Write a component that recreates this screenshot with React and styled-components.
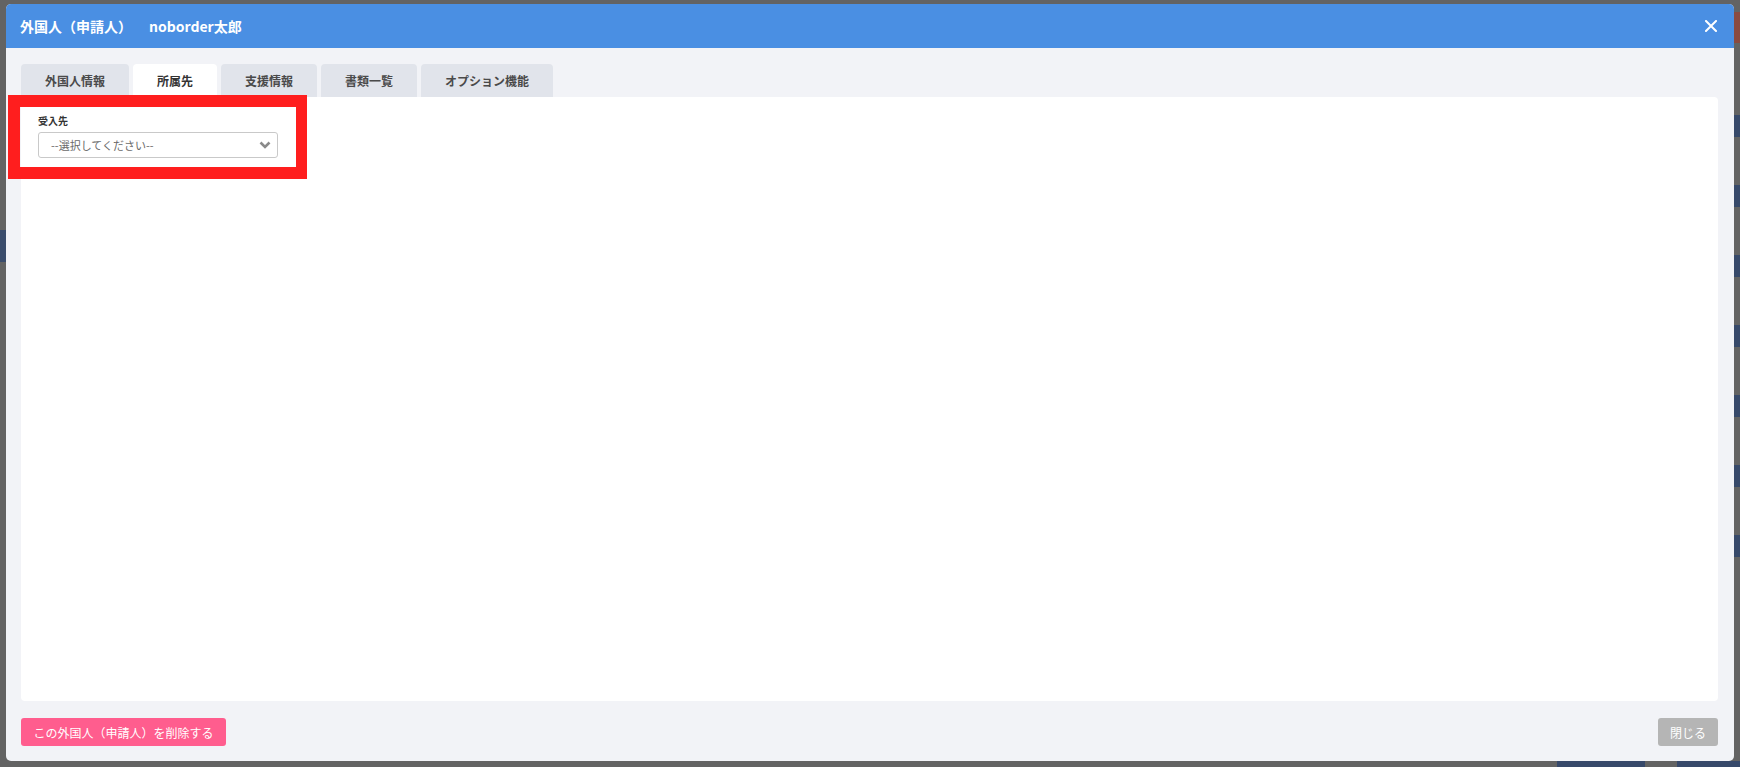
import React, { useState } from "react";
import styled, { createGlobalStyle } from "styled-components";

const GlobalStyle = createGlobalStyle`
  html, body {
    margin: 0;
    padding: 0;
  }
  body {
    font-family: "Noto Sans CJK JP", "Noto Sans", sans-serif;
    color: #333;
  }
  * {
    box-sizing: border-box;
  }
`;

// dimmed page behind the modal, only slivers of it are visible
const Backdrop = styled.div`
  width: 1740px;
  height: 767px;
  padding: 4px 6px 6px 6px;
  display: flex;
  background-color: #636363;
  background-image:
    linear-gradient(#8a4a40, #8a4a40),
    repeating-linear-gradient(
      to bottom,
      #37496a 0px,
      #37496a 22px,
      #636363 22px,
      #636363 70px
    ),
    linear-gradient(#3a4c6c, #3a4c6c),
    linear-gradient(#37496a, #37496a),
    linear-gradient(#37496a, #37496a);
  background-size: 6px 31px, 6px 470px, 6px 32px, 88px 6px, 63px 6px;
  background-position: 1734px 12px, 1734px 115px, 0 230px, 1557px 761px,
    1677px 761px;
  background-repeat: no-repeat;
`;

const Modal = styled.div`
  flex: 1;
  display: flex;
  flex-direction: column;
  background: #f2f3f7;
  border-radius: 5px;
  overflow: hidden;
`;

const Header = styled.div`
  height: 44px;
  flex-shrink: 0;
  display: flex;
  align-items: center;
  justify-content: space-between;
  padding: 0 16px 0 14px;
  background: #4a8fe3;
  color: #fff;
`;

const Title = styled.h1`
  margin: 0;
  font-size: 14px;
  font-weight: 700;
  white-space: pre;
`;

const Name = styled.span`
  margin-left: 17px;
`;

const CloseIcon = styled.button`
  border: none;
  background: none;
  padding: 0;
  width: 14px;
  height: 14px;
  display: flex;
  align-items: center;
  justify-content: center;
  cursor: pointer;
`;

const Body = styled.div`
  flex: 1;
  display: flex;
  flex-direction: column;
  padding: 16px 16px 15px 15px;
  min-height: 0;
`;

const TabList = styled.div`
  display: flex;
  gap: 4px;
  height: 33px;
`;

const Tab = styled.button`
  border: none;
  border-radius: 4px 4px 0 0;
  padding: 0 24px;
  height: 33px;
  font-family: inherit;
  font-size: 12px;
  font-weight: 700;
  color: ${(props) => (props.active ? "#333" : "#4a4a4a")};
  background: ${(props) => (props.active ? "#fff" : "#e1e4eb")};
  cursor: pointer;
`;

const Panel = styled.div`
  position: relative;
  flex: 1;
  background: #fff;
  border-radius: 0 4px 4px 4px;
  padding: 17px 17px;
`;

// annotation frame laid over the screenshot
const Highlight = styled.div`
  position: absolute;
  left: -13px;
  top: -2px;
  width: 299px;
  height: 84px;
  border: 12px solid #ff1e1e;
  border-right-width: 11px;
  pointer-events: none;
`;

const Field = styled.div`
  display: flex;
  flex-direction: column;
  gap: 4px;
  width: 240px;
`;

const Label = styled.label`
  font-size: 10px;
  font-weight: 700;
  line-height: 14px;
  color: #333;
`;

const SelectBox = styled.div`
  position: relative;
  height: 26px;
  border: 1px solid #c9c9c9;
  border-radius: 3px;
  display: flex;
  align-items: center;
  justify-content: space-between;
  padding: 0 6px 0 12px;
  font-size: 11px;
  color: #6a6a6a;
  background: #fff;
`;

const Footer = styled.div`
  margin-top: 17px;
  display: flex;
  justify-content: space-between;
`;

const Button = styled.button`
  height: 28px;
  border: none;
  border-radius: 3px;
  padding: 0 ${(props) => (props.danger ? "12.5px" : "12px")};
  font-family: inherit;
  font-size: 12px;
  color: #fff;
  background: ${(props) => (props.danger ? "#ff5d8e" : "#b5b5b5")};
  cursor: pointer;
`;

const tabs = ["外国人情報", "所属先", "支援情報", "書類一覧", "オプション機能"];

const App = () => {
  const [activeTab, setActiveTab] = useState(1);

  return (
    <>
      <GlobalStyle />
      <Backdrop>
        <Modal>
          <Header>
            <Title>
              外国人（申請人）<Name>noborder太郎</Name>
            </Title>
            <CloseIcon>
              <svg width="12" height="12" viewBox="0 0 12 12">
                <path
                  d="M1 1 L11 11 M11 1 L1 11"
                  stroke="#fff"
                  strokeWidth="2"
                  strokeLinecap="square"
                />
              </svg>
            </CloseIcon>
          </Header>
          <Body>
            <TabList>
              {tabs.map((t, i) => (
                <Tab
                  key={t}
                  active={i === activeTab ? "true" : undefined}
                  onClick={() => setActiveTab(i)}
                >
                  {t}
                </Tab>
              ))}
            </TabList>
            <Panel>
              <Field>
                <Label>受入先</Label>
                <SelectBox>
                  <span>--選択してください--</span>
                  <svg width="12" height="8" viewBox="0 0 12 8">
                    <polyline
                      points="1.5,1.5 6,6 10.5,1.5"
                      fill="none"
                      stroke="#8a8a8a"
                      strokeWidth="2.6"
                    />
                  </svg>
                </SelectBox>
              </Field>
              <Highlight />
            </Panel>
            <Footer>
              <Button danger="true">この外国人（申請人）を削除する</Button>
              <Button>閉じる</Button>
            </Footer>
          </Body>
        </Modal>
      </Backdrop>
    </>
  );
};

export default App;
